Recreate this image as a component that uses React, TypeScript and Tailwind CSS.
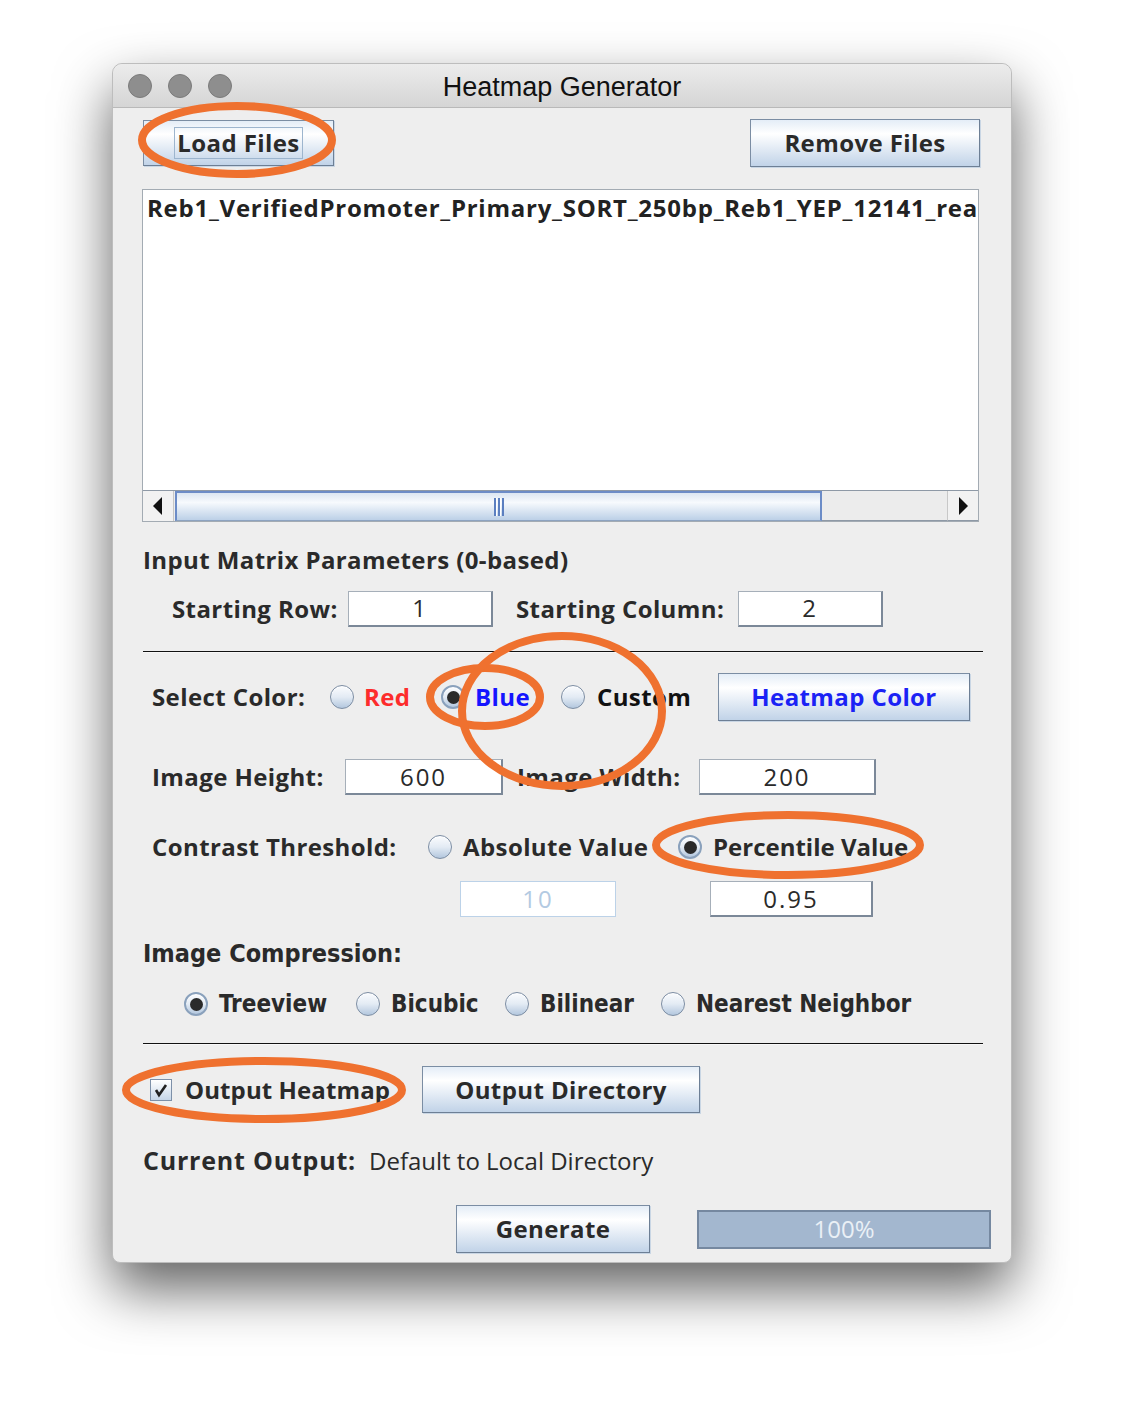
import React from "react";

const btn =
  "flex items-center justify-center border border-[#7b8da3] border-b-[#6d7f95] border-r-[#6d7f95] bg-linear-to-b from-[#e4edf7] via-white via-30% to-[#c1d3e8] text-[24px] font-bold tracking-[0.4px] text-[#2a2a2a] shadow-[1px_1px_0_#c9d6e4]";

function Radio({ checked }: { checked?: boolean }) {
  return (
    <span
      className={`flex h-[24px] w-[24px] shrink-0 items-center justify-center rounded-full bg-linear-to-b from-[#fbfcfe] via-[#e3ebf4] to-[#b3c7de] shadow-[inset_0_1px_1px_rgba(255,255,255,0.9)] ${
        checked ? "border-2 border-[#8aa1bc]" : "border border-[#7c8da3]"
      }`}
    >
      {checked && <span className="h-[13px] w-[13px] rounded-full bg-[#2a2a2a]" />}
    </span>
  );
}

function Field({ value, w, disabled }: { value: string; w: string; disabled?: boolean }) {
  return (
    <div
      className={`flex h-[36px] ${w} items-center justify-center bg-white text-[24px] font-normal tracking-[2px] ${
        disabled
          ? "border border-[#bcd2e8] text-[#b3cae2]"
          : "border-l border-t border-[#a6afb9] border-b-2 border-r-2 border-b-[#7b8898] border-r-[#7b8898] text-[#2a2a2a]"
      }`}
    >
      {value}
    </div>
  );
}

function Sep() {
  return <div className="ml-[30px] h-[2px] w-[840px] border-t border-[#111] border-b border-b-[#f8f8f8]" />;
}

export default function App() {
  return (
    <div className="relative h-[1424px] w-[1124px] overflow-hidden bg-white font-['Open_Sans','DejaVu_Sans',sans-serif] text-[#2a2a2a]">
      <div className="pl-[112px] pt-[63px]">
        <div className="flex h-[1200px] w-[900px] flex-col rounded-b-[8px] rounded-t-[10px] border border-[#bdbdbd] bg-[#eeeeee] shadow-[0_26px_55px_rgba(0,0,0,0.62)]">
          {/* Title bar */}
          <div className="grid h-[44px] grid-cols-[1fr_auto_1fr] items-center rounded-t-[10px] border-b border-[#b9b9b9] bg-linear-to-b from-[#ececec] to-[#d5d5d5]">
            <div className="flex gap-[16px] pl-[15px]">
              <span className="h-[24px] w-[24px] rounded-full border border-[#7b7b7b] bg-[#8e8e8e]" />
              <span className="h-[24px] w-[24px] rounded-full border border-[#7b7b7b] bg-[#8e8e8e]" />
              <span className="h-[24px] w-[24px] rounded-full border border-[#7b7b7b] bg-[#8e8e8e]" />
            </div>
            <div className="pt-[3px] font-['Liberation_Sans',Arial,sans-serif] text-[27px] text-[#111]">Heatmap Generator</div>
            <div />
          </div>

          {/* Buttons */}
          <div className="mt-[11px] flex h-[48px] items-center justify-between pl-[30px] pr-[31px]">
            <div className={`${btn} h-[46px] w-[191px]`}>
              <span className="flex h-[32px] items-center border border-[#9db5ce] px-[2px]">Load Files</span>
            </div>
            <div className={`${btn} h-[48px] w-[230px]`}>Remove Files</div>
          </div>

          {/* List */}
          <div className="ml-[29px] mt-[22px] flex h-[333px] w-[837px] flex-col border border-[#a3abb3] bg-white">
            <div className="overflow-hidden whitespace-nowrap pl-[4px] pt-[3px] text-[24px] font-bold leading-[30px] tracking-[0.75px] text-[#222]">
              Reb1_VerifiedPromoter_Primary_SORT_250bp_Reb1_YEP_12141_rea
            </div>
            <div className="flex-1" />
            <div className="flex h-[31px] border-t border-[#8e99a6] bg-[#ececec]">
              <div className="flex w-[31px] items-center justify-center border-r border-[#c8c8c8] bg-[#f2f2f2]">
                <svg width="10" height="18" viewBox="0 0 10 18">
                  <path d="M9 0 L0 9 L9 18 Z" fill="#111" />
                </svg>
              </div>
              <div className="relative ml-[1px] flex w-[647px] items-center justify-center border-l-2 border-r-2 border-t-2 border-[#6c8cc7] border-b border-b-[#8da3c0] bg-linear-to-b from-[#dbe6f2] via-[#f7fafd] via-35% to-[#bcd0e7]">
                <svg width="12" height="18" viewBox="0 0 12 18">
                  <rect x="1" y="0" width="2" height="18" fill="#5b7fc0" />
                  <rect x="3" y="0" width="1" height="18" fill="#ffffff" />
                  <rect x="5" y="0" width="2" height="18" fill="#5b7fc0" />
                  <rect x="7" y="0" width="1" height="18" fill="#ffffff" />
                  <rect x="9" y="0" width="2" height="18" fill="#5b7fc0" />
                </svg>
              </div>
              <div className="flex-1 border-b border-[#8e99a6]" />
              <div className="flex w-[31px] items-center justify-center border-b border-l border-[#c8c8c8] border-b-[#8e99a6] bg-[#f2f2f2]">
                <svg width="10" height="18" viewBox="0 0 10 18">
                  <path d="M1 0 L10 9 L1 18 Z" fill="#111" />
                </svg>
              </div>
            </div>
          </div>

          {/* Heading */}
          <div className="mt-[23px] flex h-[30px] items-center pl-[30px] text-[24px] font-bold tracking-[0.4px]">
            Input Matrix Parameters (0-based)
          </div>

          {/* Starting row */}
          <div className="mt-[15px] flex h-[37px] items-center pl-[59px] text-[24px] font-bold tracking-[0.4px]">
            <div className="w-[176px]">Starting Row:</div>
            <Field value="1" w="w-[145px]" />
            <div className="ml-[23px] w-[222px]">Starting Column:</div>
            <Field value="2" w="w-[145px]" />
          </div>

          <div className="mt-[24px]">
            <Sep />
          </div>

          {/* Color row */}
          <div className="mt-[20px] flex h-[48px] items-center pl-[39px] text-[24px] font-bold tracking-[0.4px]">
            <div className="w-[178px]">Select Color:</div>
            <div className="flex w-[111px] items-center gap-[10px]">
              <Radio />
              <span className="text-[#fd2c2c]">Red</span>
            </div>
            <div className="flex w-[120px] items-center gap-[10px]">
              <Radio checked />
              <span className="text-[#1515ff]">Blue</span>
            </div>
            <div className="flex w-[157px] items-center gap-[12px]">
              <Radio />
              <span className="text-[#111]">Custom</span>
            </div>
            <div className={`${btn} h-[48px] w-[252px] !text-[#1a22f5]`}>Heatmap Color</div>
          </div>

          {/* Image size row */}
          <div className="mt-[38px] flex h-[36px] items-center pl-[39px] text-[24px] font-bold tracking-[0.4px]">
            <div className="w-[193px]">Image Height:</div>
            <Field value="600" w="w-[158px]" />
            <div className="ml-[14px] w-[182px]">Image Width:</div>
            <Field value="200" w="w-[177px]" />
          </div>

          {/* Contrast row */}
          <div className="mt-[36px] flex h-[32px] items-center pl-[39px] text-[24px] font-bold tracking-[0.4px]">
            <div className="w-[276px]">Contrast Threshold:</div>
            <div className="flex w-[250px] items-center gap-[11px]">
              <Radio />
              <span>Absolute Value</span>
            </div>
            <div className="flex items-center gap-[11px]">
              <Radio checked />
              <span className="tracking-[0px]">Percentile Value</span>
            </div>
          </div>

          {/* Threshold fields */}
          <div className="mt-[18px] flex h-[36px] items-center pl-[347px]">
            <Field value="10" w="w-[156px]" disabled />
            <div className="ml-[94px]">
              <Field value="0.95" w="w-[163px]" />
            </div>
          </div>

          {/* Compression */}
          <div className="mt-[22px] flex h-[30px] items-center pl-[30px] font-['DejaVu_Sans_Condensed','Liberation_Sans_Narrow',sans-serif] text-[25px] font-semibold">
            Image Compression:
          </div>
          <div className="mt-[20px] flex h-[30px] items-center pl-[71px] font-['DejaVu_Sans_Condensed','Liberation_Sans_Narrow',sans-serif] text-[24px] font-semibold">
            <div className="flex w-[172px] items-center gap-[11px]">
              <Radio checked />
              <span>Treeview</span>
            </div>
            <div className="flex w-[149px] items-center gap-[11px]">
              <Radio />
              <span>Bicubic</span>
            </div>
            <div className="flex w-[156px] items-center gap-[11px]">
              <Radio />
              <span>Bilinear</span>
            </div>
            <div className="flex items-center gap-[11px]">
              <Radio />
              <span>Nearest Neighbor</span>
            </div>
          </div>

          <div className="mt-[24px]">
            <Sep />
          </div>

          {/* Output row */}
          <div className="mt-[21px] flex h-[47px] items-center pl-[37px] text-[24px] font-bold tracking-[0.4px]">
            <div className="flex w-[272px] items-center gap-[13px]">
              <span className="flex h-[22px] w-[22px] items-center justify-center border border-[#7d90a8] bg-linear-to-b from-white to-[#c6d6e8]">
                <svg width="16" height="16" viewBox="0 0 16 16">
                  <path d="M3 8 L6 13 L13 3" stroke="#222" strokeWidth="2.6" fill="none" />
                </svg>
              </span>
              <span className="tracking-[0.1px]">Output Heatmap</span>
            </div>
            <div className={`${btn} h-[47px] w-[278px]`}>Output Directory</div>
          </div>

          {/* Current output */}
          <div className="mt-[33px] flex h-[30px] items-center pl-[30px] text-[24px]">
            <div className="w-[226px] text-[25px] font-bold tracking-[0.8px]">Current Output:</div>
            <div className="font-normal">Default to Local Directory</div>
          </div>

          {/* Generate */}
          <div className="mt-[29px] flex h-[48px] items-center pl-[343px]">
            <div className={`${btn} h-[48px] w-[194px]`}>Generate</div>
            <div className="ml-[47px] flex h-[39px] w-[294px] items-center justify-center border-2 border-[#7588a0] bg-[#a3b7cf] text-[24px] text-[#eaf0f6]">
              100%
            </div>
          </div>
        </div>
      </div>

      {/* Annotation ellipses */}
      <svg className="pointer-events-none absolute left-0 top-0" width="1124" height="1424" viewBox="0 0 1124 1424">
        <g fill="none" stroke="#ef712f" strokeWidth="8">
          <ellipse cx="237" cy="140" rx="95" ry="34" />
          <ellipse cx="485" cy="697" rx="55" ry="29" />
          <ellipse cx="562" cy="711" rx="100" ry="75" />
          <ellipse cx="788" cy="845" rx="132" ry="30" />
          <ellipse cx="264" cy="1090" rx="138" ry="29" />
        </g>
      </svg>
    </div>
  );
}
